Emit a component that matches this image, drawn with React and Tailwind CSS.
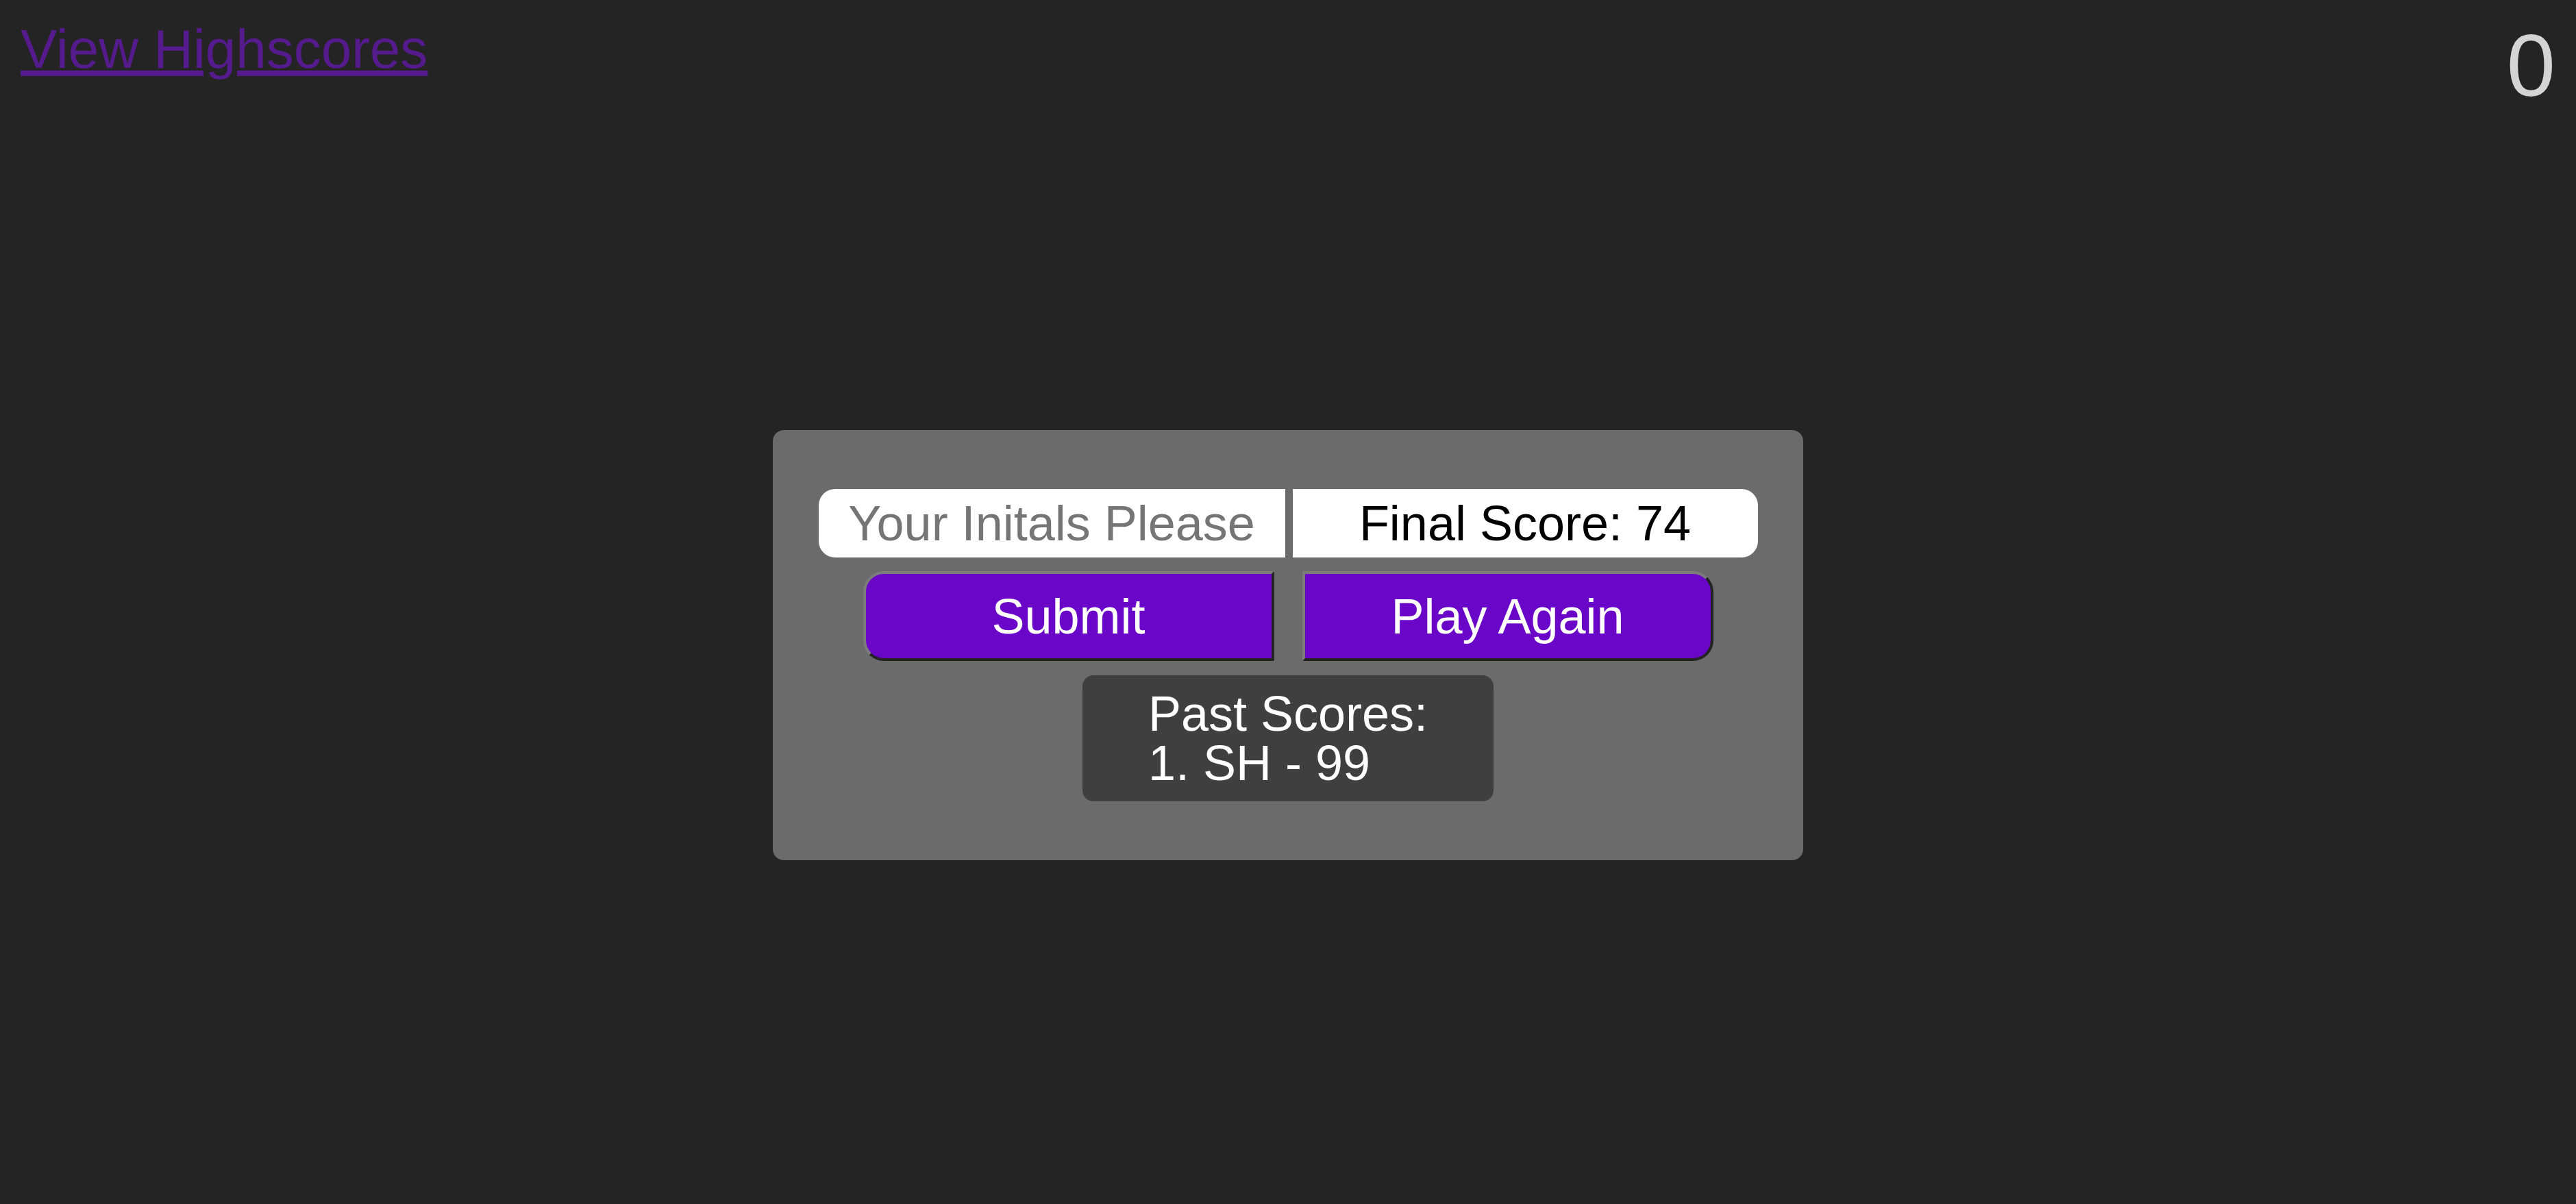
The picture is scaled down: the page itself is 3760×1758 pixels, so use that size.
import React from "react";

export default function App() {
  return (
    <div
      className="min-h-screen w-full bg-[#242424] leading-[normal]"
      style={{ fontFamily: '"Liberation Sans", Arial, sans-serif' }}
    >
      <header className="flex items-start justify-between px-[30px] pt-[22px]">
        <a href="#" className="mt-[4px] text-[80px] leading-[normal] text-[#551a8b] underline">
          View Highscores
        </a>
        <div className="text-[128px] leading-[normal] text-[#d4d4d4]">0</div>
      </header>

      <div className="mx-auto mt-[459px] flex w-[1504px] flex-col items-center gap-[20px] rounded-[16px] bg-[#6b6b6b] py-[86px]">
        <div className="flex items-center gap-[11px]">
          <input
            type="text"
            placeholder="Your Initals Please"
            className="h-[100px] w-[681px] rounded-l-[24px] bg-white text-center text-[72px] leading-[normal] text-black outline-none placeholder:text-[#757575]"
          />
          <div className="flex h-[100px] w-[679px] items-center justify-center rounded-r-[24px] bg-white text-[72px] leading-[normal] text-black">
            Final Score: 74
          </div>
        </div>

        <div className="flex items-center gap-[41px]">
          <button className="h-[131px] w-[600px] rounded-l-[30px] border-[4px] border-t-[#7b7b7b] border-l-[#7b7b7b] border-r-[#232323] border-b-[#232323] bg-[#6a06c8] text-[72px] leading-[normal] text-white">
            Submit
          </button>
          <button className="h-[131px] w-[600px] rounded-r-[30px] border-[4px] border-t-[#7b7b7b] border-l-[#7b7b7b] border-r-[#232323] border-b-[#232323] bg-[#6a06c8] text-[72px] leading-[normal] text-white">
            Play Again
          </button>
        </div>

        <div className="mt-[1px] flex w-[600px] justify-center rounded-[16px] bg-[#3f3f3f] py-[20px] text-[72px] leading-[72px] text-white">
          <div className="text-left">
            <div>Past Scores:</div>
            <div>1. SH - 99</div>
          </div>
        </div>
      </div>
    </div>
  );
}
